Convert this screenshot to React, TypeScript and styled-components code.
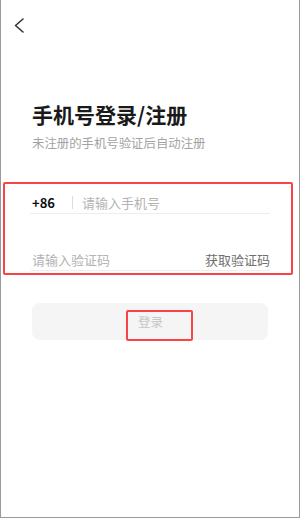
import React from "react";
import styled, { createGlobalStyle } from "styled-components";

const Global = createGlobalStyle`
  html, body { margin: 0; padding: 0; background: #fff; }
  body { font-family: "Noto Sans CJK SC", "Noto Sans", sans-serif; }
  * { box-sizing: border-box; }
`;

const Frame = styled.div`
  width: 300px;
  height: 518px;
  background: #fff;
  border-left: 1px solid #9a9a9a;
  border-right: 1px solid #9a9a9a;
  border-bottom: 1px solid #9a9a9a;
  overflow: hidden;
`;

const Header = styled.div`
  height: 50px;
  padding: 17px 0 0 12px;
`;

const BackButton = styled.button`
  border: 0;
  background: none;
  padding: 0;
  display: block;
  cursor: pointer;
`;

const Title = styled.h1`
  margin: 52px 0 0 31px;
  font-size: 21px;
  line-height: 25px;
  font-weight: 700;
  color: #1a1a1a;
`;

const Subtitle = styled.p`
  margin: 8px 0 0 31px;
  font-size: 12.4px;
  line-height: 17px;
  color: #a3a3a3;
`;

const Form = styled.div`
  margin: 30px 0 0 2px;
  width: 290px;
  border: 2px solid #f54545;
  border-radius: 2px;
  padding: 7px 21px 2px 25px;
`;

const Row = styled.div<{ $gap?: number }>`
  display: flex;
  align-items: center;
  height: 23px;
  margin-top: ${(p) => p.$gap ?? 0}px;
  border-bottom: 1px solid #eeeeee;
  font-size: 13px;
`;

const Code = styled.span`
  font-weight: 700;
  color: #111;
  padding-left: 2px;
  width: 42px;
`;

const Divider = styled.span`
  width: 1px;
  height: 13px;
  background: #dddddd;
  margin-right: 7px;
`;

const Field = styled.input`
  flex: 1;
  min-width: 0;
  border: 0;
  outline: none;
  padding: 0 0 0 2px;
  font: inherit;
  font-size: 13px;
  color: #333;
  background: transparent;
  &::placeholder { color: #b3b3b3; }
`;

const GetCode = styled.span`
  color: #6f6f6f;
  font-size: 13px;
  white-space: nowrap;
`;

const Submit = styled.div`
  margin: 28px 0 0 31px;
  width: 236px;
  height: 37px;
  border-radius: 8px;
  background: #f5f5f5;
  display: flex;
  justify-content: center;
  align-items: flex-start;
  padding-top: 7px;
  overflow: visible;
`;

const SubmitLabel = styled.span`
  display: block;
  width: 67px;
  height: 31px;
  border: 2px solid #f54545;
  border-radius: 2px;
  text-align: left;
  padding-left: 10px;
  line-height: 19px;
  font-size: 12.5px;
  color: #c6c6c6;
  margin-left: 19px;
`;

export default function App() {
  return (
    <>
      <Global />
      <Frame>
        <Header>
          <BackButton aria-label="返回">
            <svg width="12" height="17" viewBox="0 0 12 17">
              <path d="M10 2 L2.5 8.5 L10 15" fill="none" stroke="#333" strokeWidth="1.6" strokeLinecap="round" strokeLinejoin="round" />
            </svg>
          </BackButton>
        </Header>
        <Title>手机号登录/注册</Title>
        <Subtitle>未注册的手机号验证后自动注册</Subtitle>
        <Form>
          <Row>
            <Code>+86</Code>
            <Divider />
            <Field placeholder="请输入手机号" />
          </Row>
          <Row $gap={34}>
            <Field placeholder="请输入验证码" />
            <GetCode>获取验证码</GetCode>
          </Row>
        </Form>
        <Submit>
          <SubmitLabel>登录</SubmitLabel>
        </Submit>
      </Frame>
    </>
  );
}
